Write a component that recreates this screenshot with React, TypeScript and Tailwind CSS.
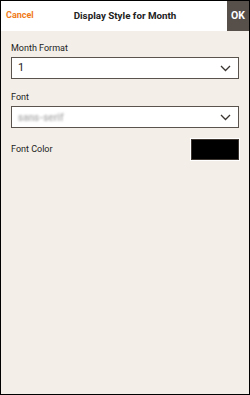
import React from "react";

function Chevron() {
  return (
    <svg width="11" height="7" viewBox="0 0 11 7" fill="none">
      <path d="M1 1 L5.5 5.5 L10 1" stroke="#3a3531" strokeWidth="1.3" />
    </svg>
  );
}

export default function App() {
  return (
    <div
      className="w-[250px] h-[395px] border border-black bg-[#f3efe8] flex flex-col overflow-hidden"
      style={{ fontFamily: "Roboto, 'Liberation Sans', sans-serif" }}
    >
      <div className="h-[30px] bg-white grid grid-cols-[1fr_auto_1fr] items-stretch shrink-0">
        <div className="flex items-center pl-[5px] text-[9px] font-bold text-[#f07b1a]">
          Cancel
        </div>
        <div className="flex items-center justify-center text-[9.8px] font-bold text-[#222]">
          Display Style for Month
        </div>
        <div className="flex justify-end">
          <div className="w-[22px] bg-[#574f49] flex items-center justify-center text-[10.5px] font-bold text-white">
            OK
          </div>
        </div>
      </div>
      <div className="flex flex-col px-[10px] pt-[11px]">
        <div className="text-[9px] text-[#222] leading-[12px]">Month Format</div>
        <div className="mt-[3px] h-[22px] bg-white border border-[#5a524c] flex items-center justify-between pl-[6px] pr-[7px]">
          <span className="text-[11px] text-[#222]">1</span>
          <Chevron />
        </div>
        <div className="mt-[12px] text-[9px] text-[#222] leading-[12px]">Font</div>
        <div className="mt-[3px] h-[22px] bg-white border border-[#5a524c] flex items-center justify-between pl-[6px] pr-[7px]">
          <span className="text-[10px] font-bold text-[#b8b8b8] blur-[1.2px]">sans-serif</span>
          <Chevron />
        </div>
        <div className="mt-[10px] flex items-center justify-between">
          <span className="text-[9px] text-[#222]">Font Color</span>
          <div className="border border-white -mr-[1px]">
            <div className="w-[48px] h-[21px] bg-black border border-[#3b342f]" />
          </div>
        </div>
      </div>
    </div>
  );
}
